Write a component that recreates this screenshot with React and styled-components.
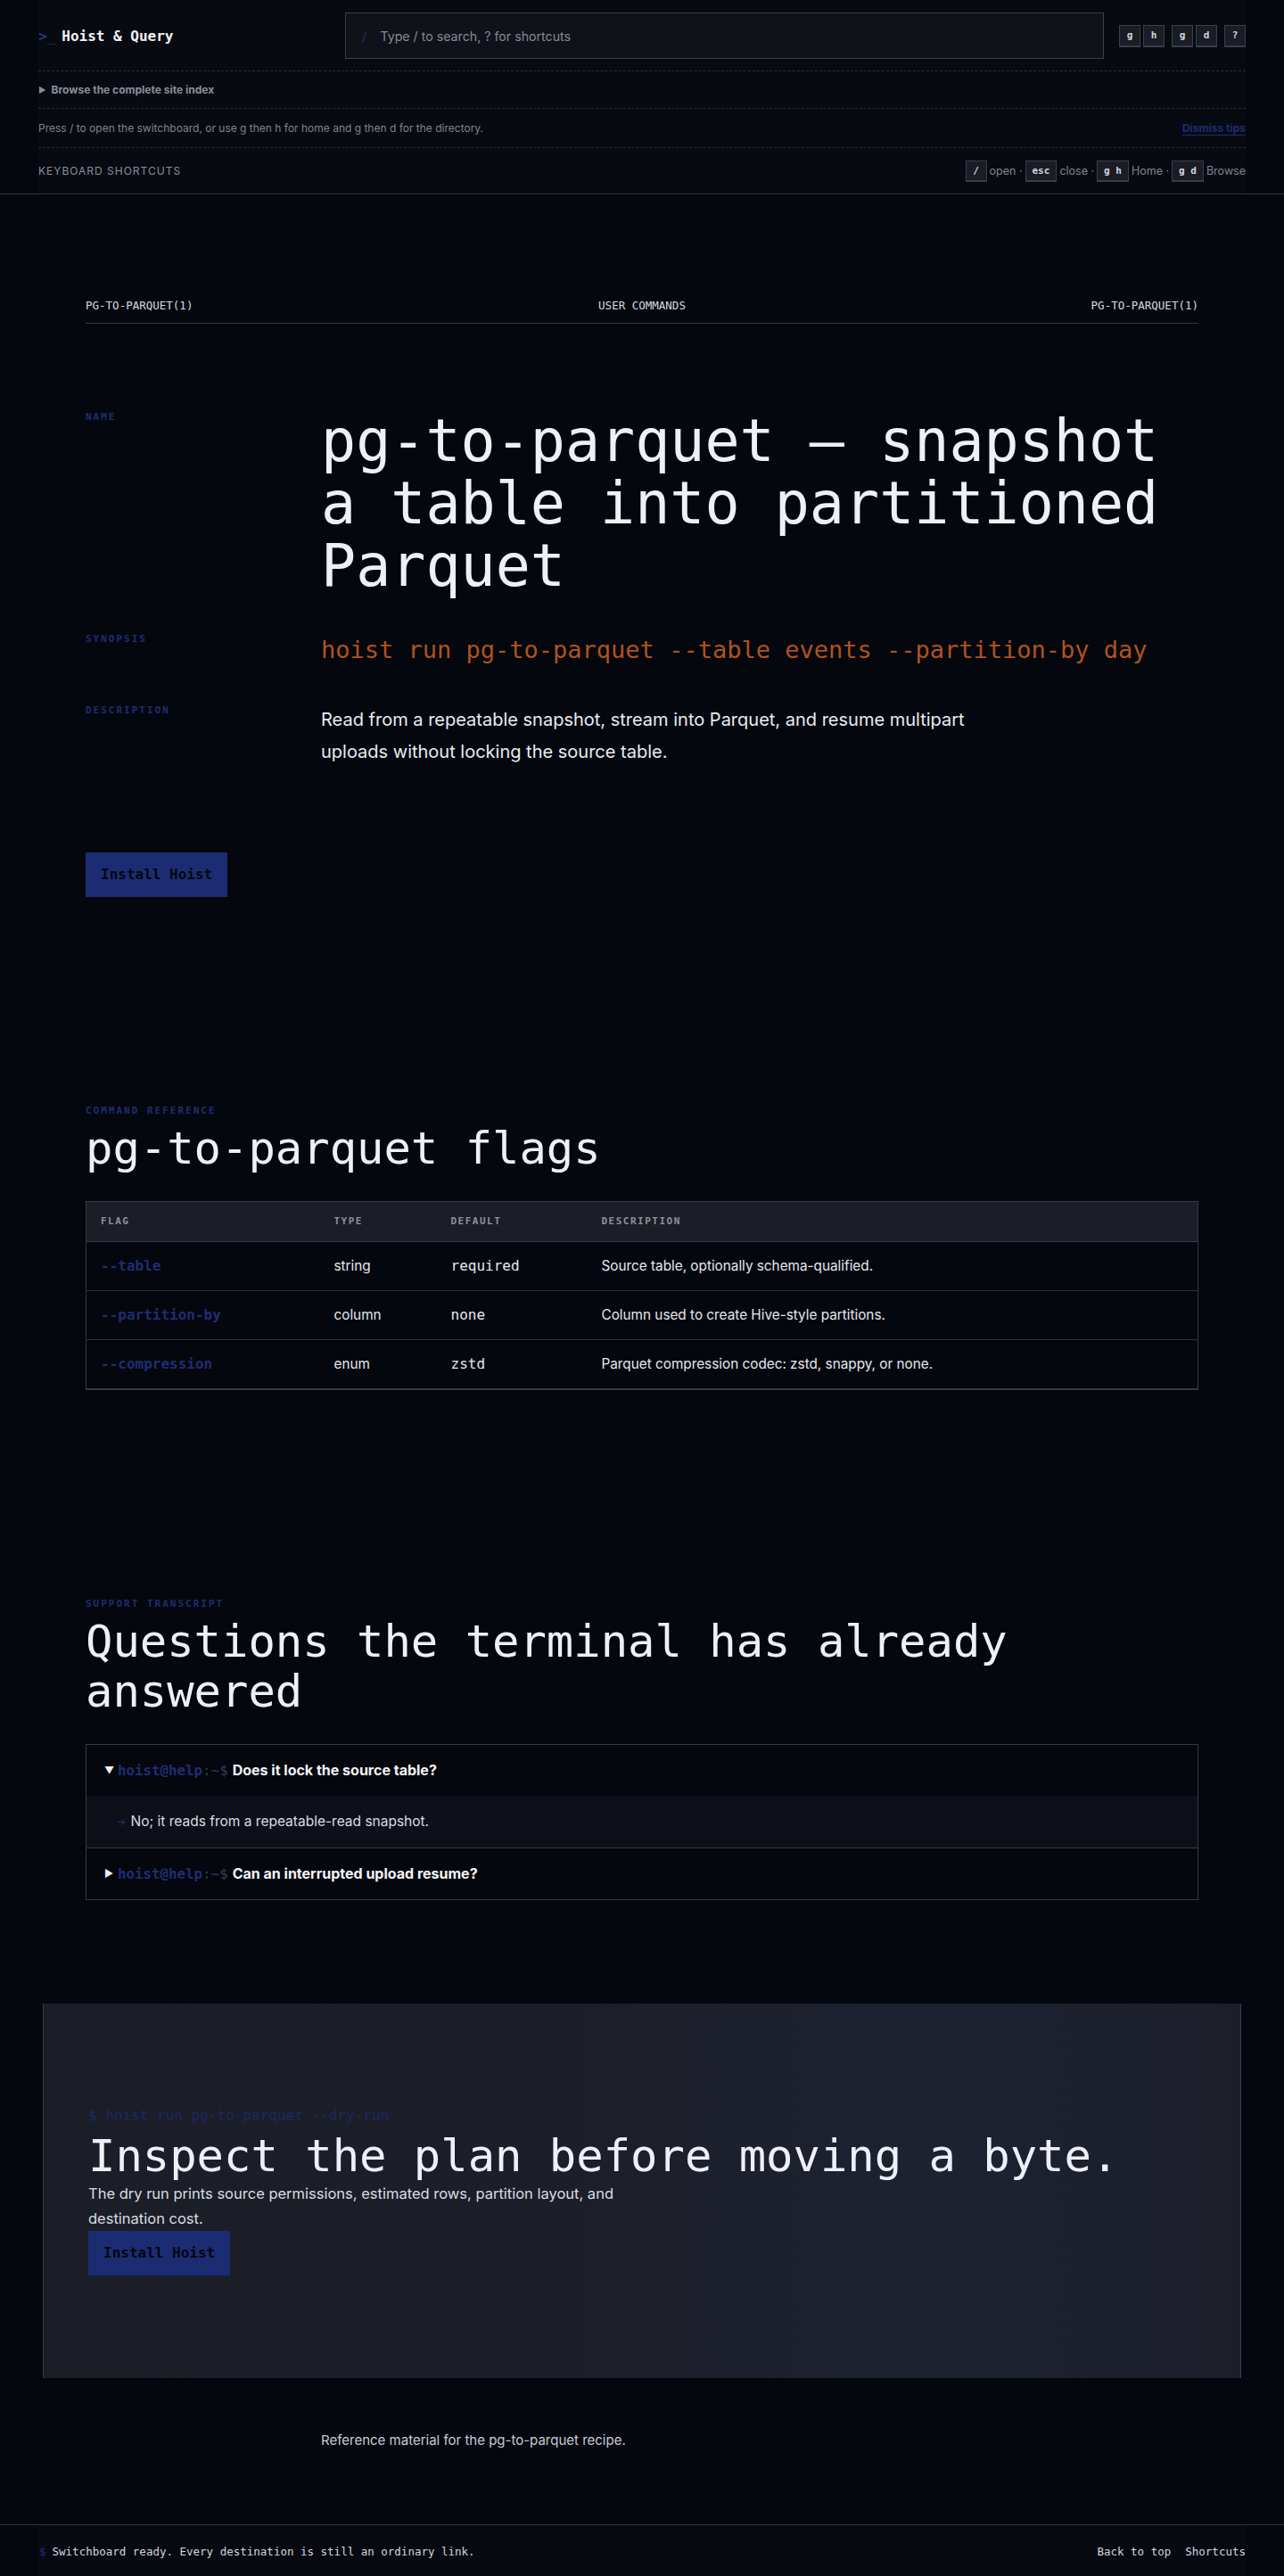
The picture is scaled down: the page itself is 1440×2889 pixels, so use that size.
import React from 'react';
import styled, { createGlobalStyle } from 'styled-components';

const MONO = `"DejaVu Sans Mono", "Liberation Mono", monospace`;
const SANS = `Inter, "Noto Sans", "Liberation Sans", sans-serif`;

const C = {
  page: '#05070e',
  panel: '#080a12',
  line: '#30333c',
  dash: '#2a2d36',
  text: '#e6e8ee',
  dim: '#8a8f9a',
  blue: '#1f2d72',
  brand: '#2c3d9c',
  orange: '#b0521e',
};

const GlobalStyle = createGlobalStyle`
  * { box-sizing: border-box; }
  html, body { margin: 0; padding: 0; background: ${C.page}; }
  body { font-family: ${SANS}; color: ${C.text}; -webkit-font-smoothing: antialiased; }
  a { color: inherit; text-decoration: none; }
`;

/* ---------- header ---------- */
const Header = styled.header`
  border-bottom: 1px solid ${C.line};
  background: ${C.page};
`;
const HeaderInner = styled.div`
  margin: 0 43px;
  background: ${C.panel};
`;
const TopBar = styled.div`
  display: flex;
  align-items: center;
  padding: 14px 0 13px;
  border-bottom: 1px dashed ${C.dash};
`;
const Brand = styled.a`
  display: flex;
  align-items: center;
  gap: 7px;
  font-family: ${MONO};
  font-size: 16px;
  font-weight: 700;
  color: #f1f2f7;
`;
const BrandMark = styled.span`
  color: ${C.brand};
  font-weight: 400;
`;
const SearchBox = styled.label`
  margin-left: auto;
  width: 851px;
  height: 52px;
  display: flex;
  align-items: center;
  gap: 13px;
  padding: 0 18px;
  background: #10121a;
  border: 1px solid #3a3d47;
`;
const SearchSlash = styled.span`
  color: ${C.blue};
  font-size: 15px;
`;
const SearchInput = styled.input`
  flex: 1;
  background: transparent;
  border: none;
  outline: none;
  font-family: ${SANS};
  font-size: 14.2px;
  color: ${C.text};
  &::placeholder { color: #858a95; }
`;
const KeyStrip = styled.div`
  margin-left: 17px;
  display: flex;
  gap: 8px;
`;
const KeyGroup = styled.div`
  display: flex;
  gap: 3px;
`;
const Kbd = styled.kbd`
  display: inline-flex;
  align-items: center;
  justify-content: center;
  min-width: 24px;
  height: ${(p) => (p.$square ? '25px' : '24px')};
  padding: 0 ${(p) => (p.$square ? '0' : '7px')};
  background: #1a1d25;
  border: 1px solid #3a3e48;
  border-bottom-width: 2px;
  font-family: ${MONO};
  font-size: 11px;
  font-weight: 700;
  color: #d2d5dc;
  white-space: pre;
`;
const IndexRow = styled.div`
  height: 42px;
  display: flex;
  align-items: center;
  gap: 6px;
  border-bottom: 1px dashed ${C.dash};
  font-size: 12px;
  font-weight: 700;
  color: ${C.dim};
`;
const Caret = styled.span`
  font-size: 9px;
  color: ${C.dim};
`;
const TipRow = styled.div`
  height: 44px;
  display: flex;
  align-items: center;
  justify-content: space-between;
  border-bottom: 1px dashed ${C.dash};
  font-size: 12px;
  color: #7f848e;
`;
const DismissLink = styled.a`
  color: ${C.blue};
  font-weight: 700;
  text-decoration: underline;
  text-underline-offset: 3px;
`;
const ShortcutRow = styled.div`
  height: 51px;
  display: flex;
  align-items: center;
  justify-content: space-between;
`;
const ShortcutTitle = styled.span`
  font-size: 12px;
  letter-spacing: 1px;
  text-transform: uppercase;
  color: ${C.dim};
`;
const ShortcutList = styled.div`
  display: flex;
  align-items: center;
  gap: 3px;
  font-size: 12.5px;
  color: #7f848e;
`;

/* ---------- main ---------- */
const Section = styled.section`
  max-width: 1248px;
  margin: 0 auto;
  padding: 116px 0;
`;
const ManHeader = styled.div`
  display: grid;
  grid-template-columns: 1fr auto 1fr;
  padding-bottom: 10px;
  border-bottom: 1px solid #353842;
  font-family: ${MONO};
  font-size: 12.5px;
  line-height: 18px;
  text-transform: uppercase;
  color: #d6d9e0;
`;
const ManCell = styled.span`
  text-align: ${(p) => p.$align || 'left'};
`;
const ManGrid = styled.div`
  margin-top: 97px;
  display: grid;
  grid-template-columns: 264px 1fr;
  row-gap: 39px;
`;
const Eyebrow = styled.div`
  font-family: ${MONO};
  font-size: 11px;
  line-height: 16px;
  font-weight: 700;
  letter-spacing: 2px;
  text-transform: uppercase;
  color: ${C.blue};
`;
const Title = styled.h1`
  margin: 0;
  font-family: ${MONO};
  font-size: 65px;
  line-height: 70px;
  font-weight: 400;
  color: #eef0f8;
`;
const Synopsis = styled.code`
  display: block;
  font-family: ${MONO};
  font-size: 27px;
  line-height: 1.5;
  color: ${C.orange};
`;
const Description = styled.p`
  margin: 0;
  max-width: 760px;
  font-size: 20px;
  line-height: 36px;
  color: #e9ebf1;
`;
const PrimaryButton = styled.a`
  display: inline-block;
  margin-top: ${(p) => p.$top || 0}px;
  height: 50px;
  padding: 0 17px;
  line-height: 50px;
  background: #1c2c73;
  font-family: ${MONO};
  font-size: 16px;
  font-weight: 700;
  color: #05070e;
`;
const SectionTitle = styled.h2`
  margin: 6px 0 31px;
  font-family: ${MONO};
  font-size: 50.5px;
  line-height: 1.11;
  font-weight: 400;
  color: #eef0f8;
`;

/* ---------- table ---------- */
const FlagTable = styled.table`
  width: 100%;
  border-collapse: collapse;
  table-layout: fixed;
  border: 1px solid #363943;
  border-bottom-width: 2px;
`;
const HeadCell = styled.th`
  width: ${(p) => (p.$w ? `${p.$w}px` : 'auto')};
  padding: 14px 16px;
  background: #1b1e26;
  border-bottom: 1px solid #3a3d47;
  text-align: left;
  font-family: ${MONO};
  font-size: 11px;
  line-height: 16px;
  font-weight: 700;
  letter-spacing: 1.5px;
  color: #8d919b;
`;
const Row = styled.tr`
  & + & td { border-top: 1px solid #2e3139; }
`;
const Cell = styled.td`
  padding: 15px 16px;
  line-height: 24px;
  font-family: ${(p) => (p.$mono ? MONO : SANS)};
  font-size: ${(p) => (p.$mono ? '16px' : '15.3px')};
  font-weight: ${(p) => (p.$flag ? 700 : 400)};
  color: ${(p) => (p.$flag ? C.blue : '#e6e8ee')};
`;

/* ---------- faq ---------- */
const Transcript = styled.div`
  border: 1px solid #363943;
`;
const Entry = styled.details`
  & + & { border-top: 1px solid #363943; }
`;
const Question = styled.summary`
  display: flex;
  align-items: center;
  padding: 16px 20px 16px 20px;
  line-height: 25px;
  list-style: none;
  cursor: pointer;
  &::-webkit-details-marker { display: none; }
`;
const Marker = styled.span`
  width: 15px;
  font-size: 11px;
  color: #f0f1f5;
`;
const Prompt = styled.span`
  font-family: ${MONO};
  font-size: 15.8px;
  font-weight: 700;
  color: ${C.blue};
  margin-right: 5px;
`;
const PromptTail = styled.span`
  color: #343b57;
  font-weight: 400;
`;
const QuestionText = styled.span`
  font-size: 16px;
  font-weight: 700;
  color: #f3f4f8;
`;
const Answer = styled.div`
  display: flex;
  align-items: center;
  gap: 5px;
  padding: 17px 20px 17px 34px;
  line-height: 24px;
  background: #0d1018;
  font-size: 15.5px;
  color: #d9dce3;
`;
const AnswerArrow = styled.span`
  font-size: 11px;
  color: #25306a;
`;

/* ---------- cta ---------- */
const CtaBand = styled.section`
  margin: 0 48px;
  height: 420px;
  display: flex;
  flex-direction: column;
  justify-content: center;
  align-items: flex-start;
  padding: 0 50px;
  background: linear-gradient(90deg, #1b1e27 0%, #1c1f29 45%, #1d2231 75%, #1c1f2a 100%);
  border-left: 1px solid #3a3d47;
  border-right: 1px solid #3a3d47;
`;
const CtaCommand = styled.div`
  font-family: ${MONO};
  font-size: 16px;
  line-height: 24px;
  color: #1d2863;
`;
const CtaTitle = styled.h2`
  margin: 5px 0 0;
  font-family: ${MONO};
  font-size: 50.5px;
  line-height: 56px;
  font-weight: 400;
  color: #eef0f8;
`;
const CtaText = styled.p`
  margin: 0;
  max-width: 640px;
  font-size: 16.5px;
  line-height: 28px;
  color: #d9dce3;
`;

/* ---------- footer ---------- */
const FooterNote = styled.div`
  max-width: 1248px;
  margin: 0 auto;
  padding: 58px 0 82px;
  display: grid;
  grid-template-columns: 264px 1fr;
`;
const NoteText = styled.p`
  grid-column: 2;
  margin: 0;
  font-size: 15px;
  line-height: 24px;
  color: #c9ccd4;
`;
const StatusBar = styled.footer`
  border-top: 1px solid ${C.line};
  background: ${C.page};
`;
const StatusInner = styled.div`
  margin: 0 43px;
  padding: 21px 0 21px 1px;
  display: flex;
  justify-content: space-between;
  align-items: center;
  background: ${C.panel};
  font-family: ${MONO};
  font-size: 12.5px;
  line-height: 18px;
  color: #d3d6dd;
`;
const StatusMessage = styled.span`
  display: flex;
  gap: 7px;
`;
const Dollar = styled.span`
  color: ${C.blue};
`;
const StatusLinks = styled.nav`
  display: flex;
  gap: 16px;
`;

const flags = [
  ['--table', 'string', 'required', 'Source table, optionally schema-qualified.'],
  ['--partition-by', 'column', 'none', 'Column used to create Hive-style partitions.'],
  ['--compression', 'enum', 'zstd', 'Parquet compression codec: zstd, snappy, or none.'],
];

export default function App() {
  return (
    <>
      <GlobalStyle />
      <Header>
        <HeaderInner>
          <TopBar>
            <Brand href="#">
              <BrandMark>&gt;_</BrandMark>Hoist &amp; Query
            </Brand>
            <SearchBox>
              <SearchSlash>/</SearchSlash>
              <SearchInput placeholder="Type / to search, ? for shortcuts" />
            </SearchBox>
            <KeyStrip>
              <KeyGroup>
                <Kbd $square>g</Kbd>
                <Kbd $square>h</Kbd>
              </KeyGroup>
              <KeyGroup>
                <Kbd $square>g</Kbd>
                <Kbd $square>d</Kbd>
              </KeyGroup>
              <KeyGroup>
                <Kbd $square>?</Kbd>
              </KeyGroup>
            </KeyStrip>
          </TopBar>
          <IndexRow>
            <Caret>▶</Caret>Browse the complete site index
          </IndexRow>
          <TipRow>
            <span>Press / to open the switchboard, or use g then h for home and g then d for the directory.</span>
            <DismissLink href="#">Dismiss tips</DismissLink>
          </TipRow>
          <ShortcutRow>
            <ShortcutTitle>Keyboard shortcuts</ShortcutTitle>
            <ShortcutList>
              <Kbd>/</Kbd>
              <span>open ·</span>
              <Kbd>esc</Kbd>
              <span>close ·</span>
              <Kbd>g h</Kbd>
              <span>Home ·</span>
              <Kbd>g d</Kbd>
              <span>Browse</span>
            </ShortcutList>
          </ShortcutRow>
        </HeaderInner>
      </Header>

      <main>
        <Section>
          <ManHeader>
            <ManCell>pg-to-parquet(1)</ManCell>
            <ManCell $align="center">User Commands</ManCell>
            <ManCell $align="right">pg-to-parquet(1)</ManCell>
          </ManHeader>
          <ManGrid>
            <Eyebrow>Name</Eyebrow>
            <Title>pg-to-parquet — snapshot a table into partitioned Parquet</Title>
            <Eyebrow>Synopsis</Eyebrow>
            <Synopsis>hoist run pg-to-parquet --table events --partition-by day</Synopsis>
            <Eyebrow>Description</Eyebrow>
            <Description>
              Read from a repeatable snapshot, stream into Parquet, and resume multipart uploads without locking the
              source table.
            </Description>
          </ManGrid>
          <PrimaryButton href="#" $top={95}>Install Hoist</PrimaryButton>
        </Section>

        <Section>
          <Eyebrow>Command reference</Eyebrow>
          <SectionTitle>pg-to-parquet flags</SectionTitle>
          <FlagTable>
            <thead>
              <tr>
                <HeadCell $w={262}>FLAG</HeadCell>
                <HeadCell $w={131}>TYPE</HeadCell>
                <HeadCell $w={169}>DEFAULT</HeadCell>
                <HeadCell>DESCRIPTION</HeadCell>
              </tr>
            </thead>
            <tbody>
              {flags.map(([flag, type, def, desc]) => (
                <Row key={flag}>
                  <Cell $mono $flag>{flag}</Cell>
                  <Cell>{type}</Cell>
                  <Cell $mono>{def}</Cell>
                  <Cell>{desc}</Cell>
                </Row>
              ))}
            </tbody>
          </FlagTable>
        </Section>

        <Section>
          <Eyebrow>Support transcript</Eyebrow>
          <SectionTitle>Questions the terminal has already answered</SectionTitle>
          <Transcript>
            <Entry open>
              <Question>
                <Marker>▼</Marker>
                <Prompt>
                  hoist@help<PromptTail>:~$</PromptTail>
                </Prompt>
                <QuestionText>Does it lock the source table?</QuestionText>
              </Question>
              <Answer>
                <AnswerArrow>→</AnswerArrow>No; it reads from a repeatable-read snapshot.
              </Answer>
            </Entry>
            <Entry>
              <Question>
                <Marker>▶</Marker>
                <Prompt>
                  hoist@help<PromptTail>:~$</PromptTail>
                </Prompt>
                <QuestionText>Can an interrupted upload resume?</QuestionText>
              </Question>
              <Answer>
                <AnswerArrow>→</AnswerArrow>Yes; completed parts are recorded and skipped on the next run.
              </Answer>
            </Entry>
          </Transcript>
        </Section>

        <CtaBand>
          <CtaCommand>$ hoist run pg-to-parquet --dry-run</CtaCommand>
          <CtaTitle>Inspect the plan before moving a byte.</CtaTitle>
          <CtaText>The dry run prints source permissions, estimated rows, partition layout, and destination cost.</CtaText>
          <PrimaryButton href="#">Install Hoist</PrimaryButton>
        </CtaBand>

        <FooterNote>
          <NoteText>Reference material for the pg-to-parquet recipe.</NoteText>
        </FooterNote>
      </main>

      <StatusBar>
        <StatusInner>
          <StatusMessage>
            <Dollar>$</Dollar>Switchboard ready. Every destination is still an ordinary link.
          </StatusMessage>
          <StatusLinks>
            <a href="#">Back to top</a>
            <a href="#">Shortcuts</a>
          </StatusLinks>
        </StatusInner>
      </StatusBar>
    </>
  );
}
